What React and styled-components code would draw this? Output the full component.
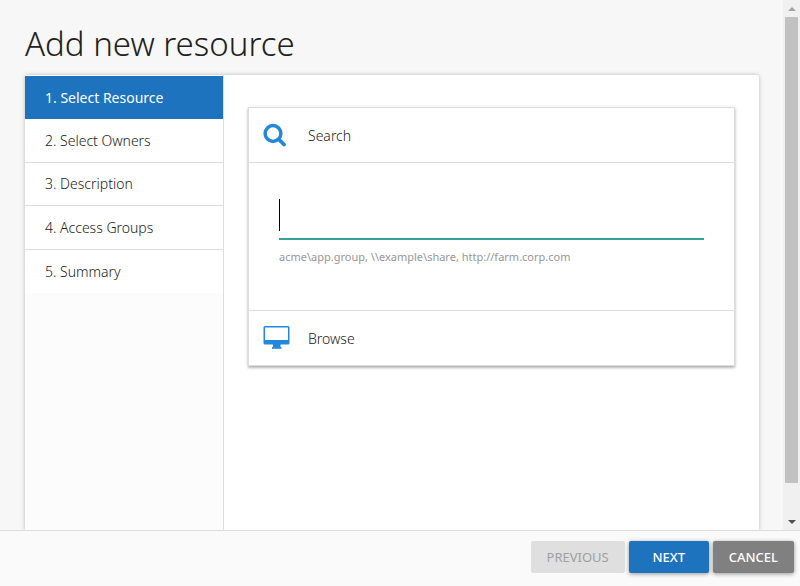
import React from "react";
import styled, { createGlobalStyle, css } from "styled-components";

const GlobalStyle = createGlobalStyle`
  *, *::before, *::after { box-sizing: border-box; }
  body {
    margin: 0;
    background: #f7f7f7;
    color: #212121;
    font-family: "Segoe UI", "Noto Sans", "Open Sans", sans-serif;
    font-size: 14px;
    font-weight: 300;
  }
  button, input { font: inherit; }
`;

const Dialog = styled.div`
  display: flex;
  flex-direction: column;
  height: 100vh;
`;

const Viewport = styled.div`
  display: flex;
  flex: 1;
  min-height: 0;
`;

const Content = styled.main`
  display: flex;
  flex-direction: column;
  flex: 1;
  min-width: 0;
  overflow: hidden;
  padding: 20px 24px 0 25px;
`;

const Title = styled.h1`
  flex: none;
  margin: 0;
  font-size: 33px;
  font-weight: 300;
  line-height: 48px;
  margin-bottom: 7px;
`;

const Panel = styled.div`
  display: flex;
  flex: 1;
  background: #fff;
  border-radius: 3px 3px 0 0;
  box-shadow: 0 0 4px rgba(0, 0, 0, 0.26);
`;

const Sidebar = styled.nav`
  flex: none;
  width: 199px;
  padding-top: 1px;
  background: #fcfcfc;
  border-right: 1px solid #ddd;
`;

const Steps = styled.ol`
  display: grid;
  grid-auto-rows: 1fr;
  height: 217px;
  margin: 0;
  padding: 0;
  list-style: none;
  background: #fff;
`;

const Step = styled.li`
  display: flex;
  border-bottom: 1px solid #ddd;
  &:first-child, &:last-child { border-bottom: 0; }
`;

const StepLink = styled.a`
  display: flex;
  flex: 1;
  align-items: center;
  padding: 0 20px;
  color: #212121;
  text-decoration: none;
  ${(p) => p.$active && css`
    background: #1e73be;
    color: #fff;
    font-weight: 400;
  `}
`;

const StepBody = styled.section`
  flex: 1;
  min-width: 0;
  padding: 32px 24px;
`;

const Accordion = styled.div`
  background: #fff;
  border: 1px solid #ddd;
  box-shadow: 0 2px 2px rgba(0, 0, 0, 0.2), 0 1px 4px rgba(0, 0, 0, 0.16);
`;

const AccordionHeader = styled.button`
  display: flex;
  align-items: center;
  gap: 16px;
  width: 100%;
  height: ${(p) => (p.$open ? "55px" : "54px")};
  padding: 0 14px;
  border: 0;
  border-bottom: ${(p) => (p.$open ? "1px solid #ddd" : "0")};
  background: #fff;
  color: #212121;
  text-align: left;
`;

const IconSlot = styled.span`
  display: flex;
  width: 29px;
  color: #2387dc;
`;

const AccordionBody = styled.div`
  height: 148px;
  padding: 30px;
  border-bottom: 1px solid #ddd;
`;

const Field = styled.div`
  position: relative;
`;

const Caret = styled.span`
  position: absolute;
  left: 0;
  top: 6px;
  width: 1px;
  height: 32px;
  background: #000;
`;

const SearchInput = styled.input`
  display: block;
  width: 100%;
  height: 47px;
  padding: 0;
  border: 0;
  border-bottom: 2px solid #32a398;
  border-radius: 0;
  outline: 0;
  background: transparent;
  caret-color: transparent;
`;

const Hint = styled.p`
  margin: 8px 0 0;
  color: #979797;
  font-size: 11px;
  font-weight: 400;
  line-height: 18px;
`;

const ScrollTrack = styled.div`
  display: flex;
  flex-direction: column;
  flex: none;
  width: 17px;
  background: #f0f0f0;
`;

const ScrollArrow = styled.div`
  display: flex;
  align-items: center;
  justify-content: center;
  height: 17px;
  color: ${(p) => (p.$muted ? "#a3a3a3" : "#505050")};
`;

const ScrollLane = styled.div`
  flex: 1;
  padding: 0 2px;
`;

const ScrollThumb = styled.div`
  height: 94%;
  background: #c1c1c1;
`;

const Footer = styled.footer`
  display: flex;
  justify-content: flex-end;
  gap: 4px;
  flex: none;
  padding: 10px 6px 13px;
  border-top: 1px solid #ddd;
  background: #fafafa;
`;

const tones = {
  muted: css`
    background: #dfdfdf;
    color: #9f9f9f;
    font-weight: 400;
    box-shadow: none;
  `,
  primary: css`background: #1e73be;`,
  neutral: css`background: #808080;`,
};

const ActionButton = styled.button`
  height: 32px;
  min-width: 80px;
  padding: 0 16px;
  border: 0;
  border-radius: 2px;
  color: #fff;
  font-size: 13px;
  font-weight: 500;
  box-shadow: 0 1px 4px rgba(0, 0, 0, 0.4);
  ${(p) => tones[p.$tone]}
`;

function SearchIcon() {
  return (
    <svg
      width="24"
      height="24"
      viewBox="0 0 24 24"
      fill="none"
      stroke="currentColor"
      aria-hidden="true"
    >
      <circle cx="10" cy="10.500" r="7.900" strokeWidth="3.500" />
      <path d="M16 16.500l5 5" strokeWidth="3.800" strokeLinecap="round" />
    </svg>
  );
}

function MonitorIcon() {
  return (
    <svg width="27" height="24" viewBox="0 0 27 24" aria-hidden="true">
      <path
        fill="currentColor"
        fillRule="evenodd"
        d="M2 0h23a1.500 1.500 0 0 1 1.500 1.500v15.500a1.500 1.500 0 0 1-1.500 1.500h-7.500v2.500h1v1.800h-9.500v-1.800h1v-2.500h-8a1.500 1.500 0 0 1-1.500-1.500v-15.500a1.500 1.500 0 0 1 1.500-1.500zM2 1.500v12.500h23v-12.500z"
      />
    </svg>
  );
}

const steps = [
  "Select Resource",
  "Select Owners",
  "Description",
  "Access Groups",
  "Summary",
];

export default function App() {
  return (
    <>
      <GlobalStyle />
      <Dialog>
        <Viewport>
          <Content>
            <Title>Add new resource</Title>
            <Panel>
              <Sidebar aria-label="Steps">
                <Steps>
                  {steps.map((name, i) => (
                    <Step key={name}>
                      <StepLink
                        href={`#step-${i + 1}`}
                        $active={i === 0}
                        aria-current={i === 0 ? "step" : undefined}
                      >
                        {`${i + 1}. ${name}`}
                      </StepLink>
                    </Step>
                  ))}
                </Steps>
              </Sidebar>
              <StepBody>
                <Accordion>
                  <AccordionHeader type="button" id="search-header" $open aria-expanded="true">
                    <IconSlot><SearchIcon /></IconSlot>
                    Search
                  </AccordionHeader>
                  <AccordionBody>
                    <Field>
                      <SearchInput
                        type="text"
                        aria-labelledby="search-header"
                        aria-describedby="search-hint"
                        autoFocus
                      />
                      <Caret />
                    </Field>
                    <Hint id="search-hint">
                      {"acme\\app.group, \\\\example\\share, http://farm.corp.com"}
                    </Hint>
                  </AccordionBody>
                  <AccordionHeader type="button" aria-expanded="false">
                    <IconSlot><MonitorIcon /></IconSlot>
                    Browse
                  </AccordionHeader>
                </Accordion>
              </StepBody>
            </Panel>
          </Content>
          <ScrollTrack aria-hidden="true">
            <ScrollArrow $muted>
              <svg width="8" height="4" viewBox="0 0 8 4"><path fill="currentColor" d="M4 0l4 4H0z" /></svg>
            </ScrollArrow>
            <ScrollLane><ScrollThumb /></ScrollLane>
            <ScrollArrow>
              <svg width="8" height="4" viewBox="0 0 8 4"><path fill="currentColor" d="M0 0h8L4 4z" /></svg>
            </ScrollArrow>
          </ScrollTrack>
        </Viewport>
        <Footer>
          <ActionButton type="button" $tone="muted" disabled>PREVIOUS</ActionButton>
          <ActionButton type="button" $tone="primary">NEXT</ActionButton>
          <ActionButton type="button" $tone="neutral">CANCEL</ActionButton>
        </Footer>
      </Dialog>
    </>
  );
}
